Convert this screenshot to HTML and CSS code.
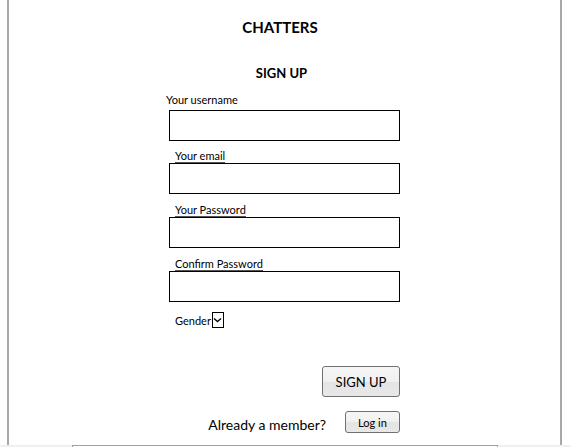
FILE: index.html
```html
<!DOCTYPE html>
<html lang="en">
<head>
<meta charset="utf-8">
<title>Chatters - Sign up</title>
<link rel="stylesheet" href="styles.css">
</head>
<body>
<div class="frame">
  <h1 class="title">CHATTERS</h1>
  <h2 class="subtitle">SIGN UP</h2>
  <form class="form">
    <label class="lbl lbl-first">Your username</label>
    <div class="field"></div>
    <label class="lbl lbl-line lbl-tight">Your email</label>
    <div class="field"></div>
    <label class="lbl lbl-line">Your Password</label>
    <div class="field"></div>
    <label class="lbl lbl-line">Confirm Password</label>
    <div class="field"></div>
    <div class="gender">
      <span class="gender-text">Gender</span>
      <span class="select">
        <svg width="9" height="6" viewBox="0 0 9 6"><path d="M1 1.5 L4.5 4.5 L8 1.5" fill="none" stroke="#000" stroke-width="1.4"/></svg>
      </span>
    </div>
    <div class="actions">
      <button type="button" class="btn btn-signup">SIGN UP</button>
    </div>
    <div class="member">
      <span class="member-text">Already a member?</span>
      <button type="button" class="btn btn-login">Log in</button>
    </div>
  </form>
</div>
<div class="bottombar"><div class="scrollthumb"></div></div>
</body>
</html>
```
FILE: styles.css
```css
html, body {
  margin: 0;
  padding: 0;
  background: #fff;
  overflow: hidden;
}
body {
  font-family: "Lato", "Open Sans", sans-serif;
  color: #000;
}
.frame {
  margin-left: 7px;
  width: 555px;
  height: 445px;
  box-sizing: border-box;
  border-left: 2px solid #a8a8a8;
  border-right: 2px solid #a8a8a8;
  display: flex;
  flex-direction: column;
}
.title {
  margin: 18px 0 0 0;
  font-size: 15px;
  line-height: 18px;
  font-weight: 700;
  text-align: center;
  padding-right: 9px;
}
.subtitle {
  margin: 29px 0 0 0;
  font-size: 13px;
  line-height: 16px;
  font-weight: 700;
  text-align: center;
  padding-right: 6px;
}
.form {
  margin: 12px 0 0 157px;
  width: 234px;
  display: flex;
  flex-direction: column;
  align-items: flex-start;
}
.lbl {
  font-size: 11px;
  line-height: 13px;
  display: block;
}
.lbl-first {
  margin-bottom: 4px;
}
.lbl-line {
  margin: 10px 0 0 9px;
  border-bottom: 1px solid #555;
  line-height: 12px;
  padding-bottom: 0;
}
.lbl-tight {
  margin-top: 9px;
}
.field {
  margin-left: 3px;
  width: 231px;
  height: 31px;
  box-sizing: border-box;
  border: 1px solid #000;
  background: #fff;
}
.gender {
  margin: 10px 0 0 9px;
  display: flex;
  align-items: center;
  font-size: 11px;
}
.select {
  margin-left: 1px;
  width: 12px;
  height: 16px;
  box-sizing: border-box;
  border: 1px solid #000;
  display: flex;
  align-items: center;
  justify-content: center;
}
.actions {
  margin-top: 38px;
  align-self: stretch;
  display: flex;
  justify-content: flex-end;
}
.btn {
  font-family: inherit;
  color: #000;
  border: 1px solid #707070;
  border-radius: 3px;
  background: linear-gradient(#f6f6f6 0%, #f0f0f0 50%, #e4e4e4 51%, #e8e8e8 100%);
  padding: 0;
  cursor: pointer;
}
.btn-signup {
  width: 78px;
  height: 31px;
  font-size: 13px;
}
.member {
  margin-top: 14px;
  align-self: stretch;
  display: flex;
  justify-content: flex-end;
  align-items: center;
  gap: 19px;
}
.member-text {
  font-size: 14px;
  margin-top: 5px;
}
.btn-login {
  width: 55px;
  height: 22px;
  font-size: 11px;
}
.bottombar {
  height: 2px;
  background: #f0f0f0;
  padding-left: 72px;
}
.scrollthumb {
  width: 426px;
  height: 2px;
  box-sizing: border-box;
  border-top: 1px solid #a0a0a0;
  border-left: 1px solid #a0a0a0;
  border-right: 1px solid #a0a0a0;
  background: #fff;
}
```
